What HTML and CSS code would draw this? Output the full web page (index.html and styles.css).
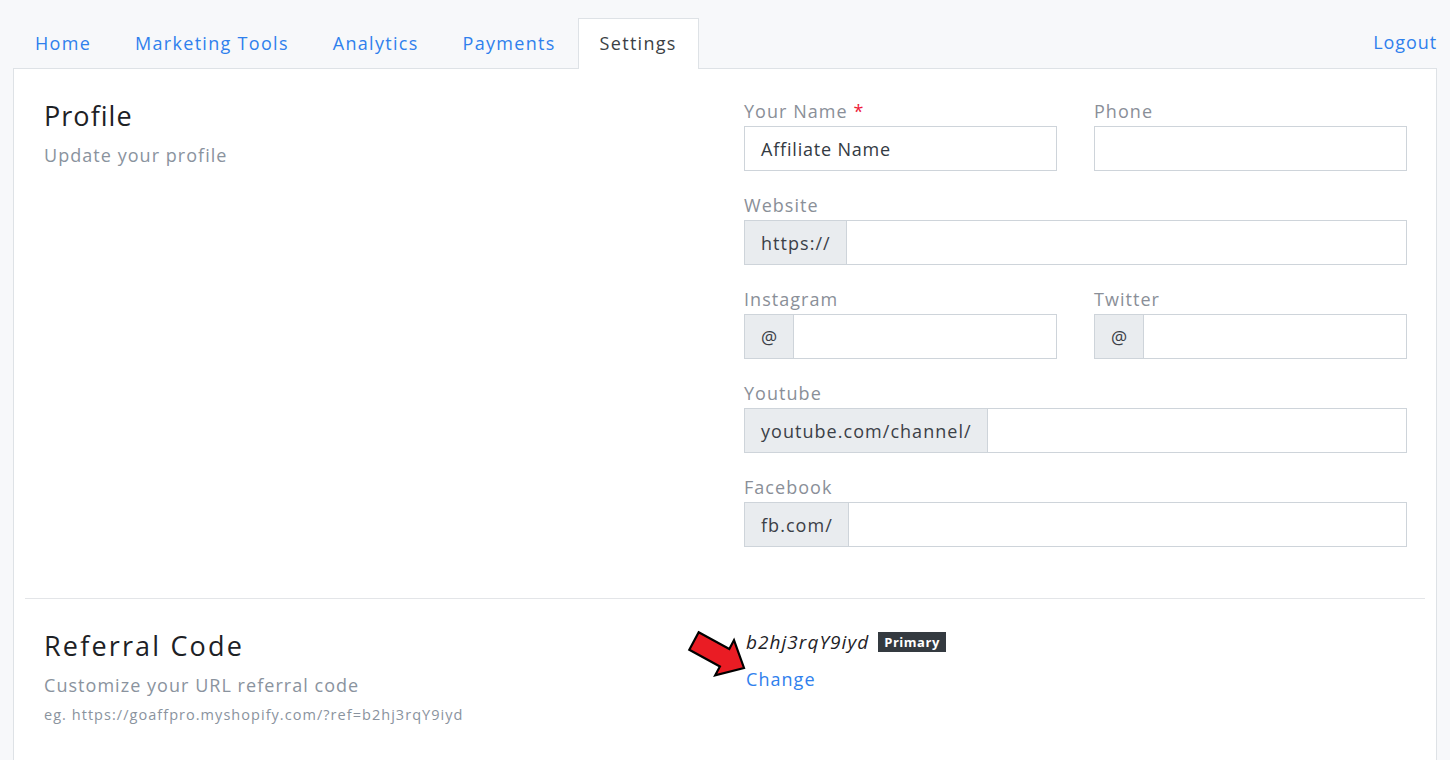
FILE: index.html
```html
<!DOCTYPE html>
<html>
<head>
<meta charset="utf-8">
<link rel="stylesheet" href="styles.css">
</head>
<body>
<div class="topbar">
  <ul class="tabs">
    <li class="tab"><a href="#">Home</a></li>
    <li class="tab"><a href="#">Marketing Tools</a></li>
    <li class="tab"><a href="#">Analytics</a></li>
    <li class="tab"><a href="#">Payments</a></li>
    <li class="tab active"><a href="#">Settings</a></li>
  </ul>
  <a class="logout" href="#">Logout</a>
</div>
<div class="card">
  <section class="section">
    <div class="intro">
      <h2 class="title">Profile</h2>
      <p class="subtitle">Update your profile</p>
    </div>
    <div class="form">
      <div class="pair">
        <div class="group">
          <label class="label">Your Name <span class="req">*</span></label>
          <div class="input"><span class="value">Affiliate Name</span></div>
        </div>
        <div class="group">
          <label class="label">Phone</label>
          <div class="input"></div>
        </div>
      </div>
      <div class="group">
        <label class="label">Website</label>
        <div class="igroup"><span class="prefix">https://</span><span class="field"></span></div>
      </div>
      <div class="pair">
        <div class="group">
          <label class="label">Instagram</label>
          <div class="igroup"><span class="prefix">@</span><span class="field"></span></div>
        </div>
        <div class="group">
          <label class="label">Twitter</label>
          <div class="igroup"><span class="prefix">@</span><span class="field"></span></div>
        </div>
      </div>
      <div class="group">
        <label class="label">Youtube</label>
        <div class="igroup"><span class="prefix">youtube.com/channel/</span><span class="field"></span></div>
      </div>
      <div class="group">
        <label class="label">Facebook</label>
        <div class="igroup"><span class="prefix">fb.com/</span><span class="field"></span></div>
      </div>
    </div>
  </section>
  <section class="section divided">
    <div class="intro">
      <h2 class="title wide">Referral Code</h2>
      <p class="subtitle">Customize your URL referral code</p>
      <p class="hint">eg. https://goaffpro.myshopify.com/?ref=b2hj3rqY9iyd</p>
    </div>
    <div class="refbox">
      <svg class="arrow" width="62" height="52" viewBox="0 0 62 52">
        <polygon points="12.7,4.2 43.3,20.9 48,12.1 58,40 29.2,47.3 33.9,38.5 3.3,21.8" fill="#ea1c24" stroke="#000" stroke-width="2.2" stroke-linejoin="miter"/>
      </svg>
      <div class="coderow"><span class="code">b2hj3rqY9iyd</span><span class="badge">Primary</span></div>
      <a class="change" href="#">Change</a>
    </div>
  </section>
</div>
</body>
</html>
```
FILE: styles.css
```css
* { box-sizing: border-box; }
html, body { margin: 0; padding: 0; }
body {
  background: #f7f8fa;
  font-family: "Open Sans", "Noto Sans", sans-serif;
  letter-spacing: 0.065em;
  color: #212529;
  height: 760px;
  overflow: hidden;
}
a { text-decoration: none; color: #2f80ed; }
.topbar {
  display: flex;
  justify-content: space-between;
  align-items: flex-end;
  padding: 18px 13px 0 13px;
  height: 68px;
}
.tabs {
  display: flex;
  list-style: none;
  margin: 0;
  padding: 0;
  position: relative;
  z-index: 2;
}
.tab {
  height: 50px;
  padding: 0 21px 2px 21px;
  display: flex;
  align-items: center;
  border: 1px solid transparent;
  border-bottom: none;
  font-size: 18px;
  letter-spacing: 0.072em;
}
.tab a { color: #2f80ed; }
.tab.active {
  background: #fff;
  border-color: #dee2e6;
  height: 51px;
  margin-bottom: -1px;
  padding-bottom: 3px;
}
.tab.active a { color: #3b3f45; }
.logout {
  font-size: 18px;
  height: 50px;
  padding-bottom: 2px;
  display: flex;
  align-items: center;
  letter-spacing: 0.05em;
}
.card {
  margin: 0 13px;
  background: #fff;
  border: 1px solid #dee2e6;
  padding: 0 11px;
  height: 720px;
}
.section {
  display: grid;
  grid-template-columns: 700px 1fr;
  padding: 30px 18px 29px 19px;
}
.section.divided {
  border-top: 1px solid #e3e5e8;
}
.title {
  margin: 0;
  font-weight: 400;
  font-size: 27px;
  line-height: 34px;
  color: #1d2125;
}
.title.wide { letter-spacing: 0.08em; }
.subtitle {
  margin: 9px 0 0 0;
  font-size: 18px;
  line-height: 27px;
  color: #8a939e;
}
.hint {
  margin: 6px 0 0 0;
  font-size: 14.5px;
  line-height: 20px;
  color: #8a939e;
}
.form { display: flex; flex-direction: column; }
.pair {
  display: grid;
  grid-template-columns: 1fr 1fr;
  column-gap: 37px;
}
.group { margin-bottom: 22px; }
.label {
  display: block;
  font-size: 18px;
  line-height: 24px;
  color: #8a8f98;
  margin-bottom: 3px;
}
.req { color: #ee1b3a; }
.input, .igroup {
  height: 45px;
  border: 1px solid #ced4da;
  background: #fff;
  display: flex;
  align-items: center;
}
.input { padding: 0 16px; }
.value { font-size: 18px; color: #333a42; letter-spacing: 0.045em; }
.prefix {
  height: 100%;
  display: flex;
  align-items: center;
  padding: 0 15px 0 16px;
  background: #e9ecef;
  border-right: 1px solid #ced4da;
  font-size: 18px;
  color: #3b4047;
}
.field { flex: 1; }
.refbox {
  position: relative;
  padding-left: 2px;
  padding-top: 1px;
}
.arrow {
  position: absolute;
  left: -58px;
  top: -1px;
}
.coderow {
  display: flex;
  align-items: center;
  height: 24px;
}
.code {
  font-style: italic;
  font-size: 19px;
  color: #1d2125;
}
.badge {
  margin-left: 9px;
  background: #343a40;
  color: #fff;
  font-weight: 700;
  font-size: 13px;
  line-height: 20px;
  padding: 0 6px;
  letter-spacing: 0.04em;
}
.change {
  display: block;
  margin-top: 13px;
  font-size: 18px;
  line-height: 24px;
  color: #2f80ed;
}
```
